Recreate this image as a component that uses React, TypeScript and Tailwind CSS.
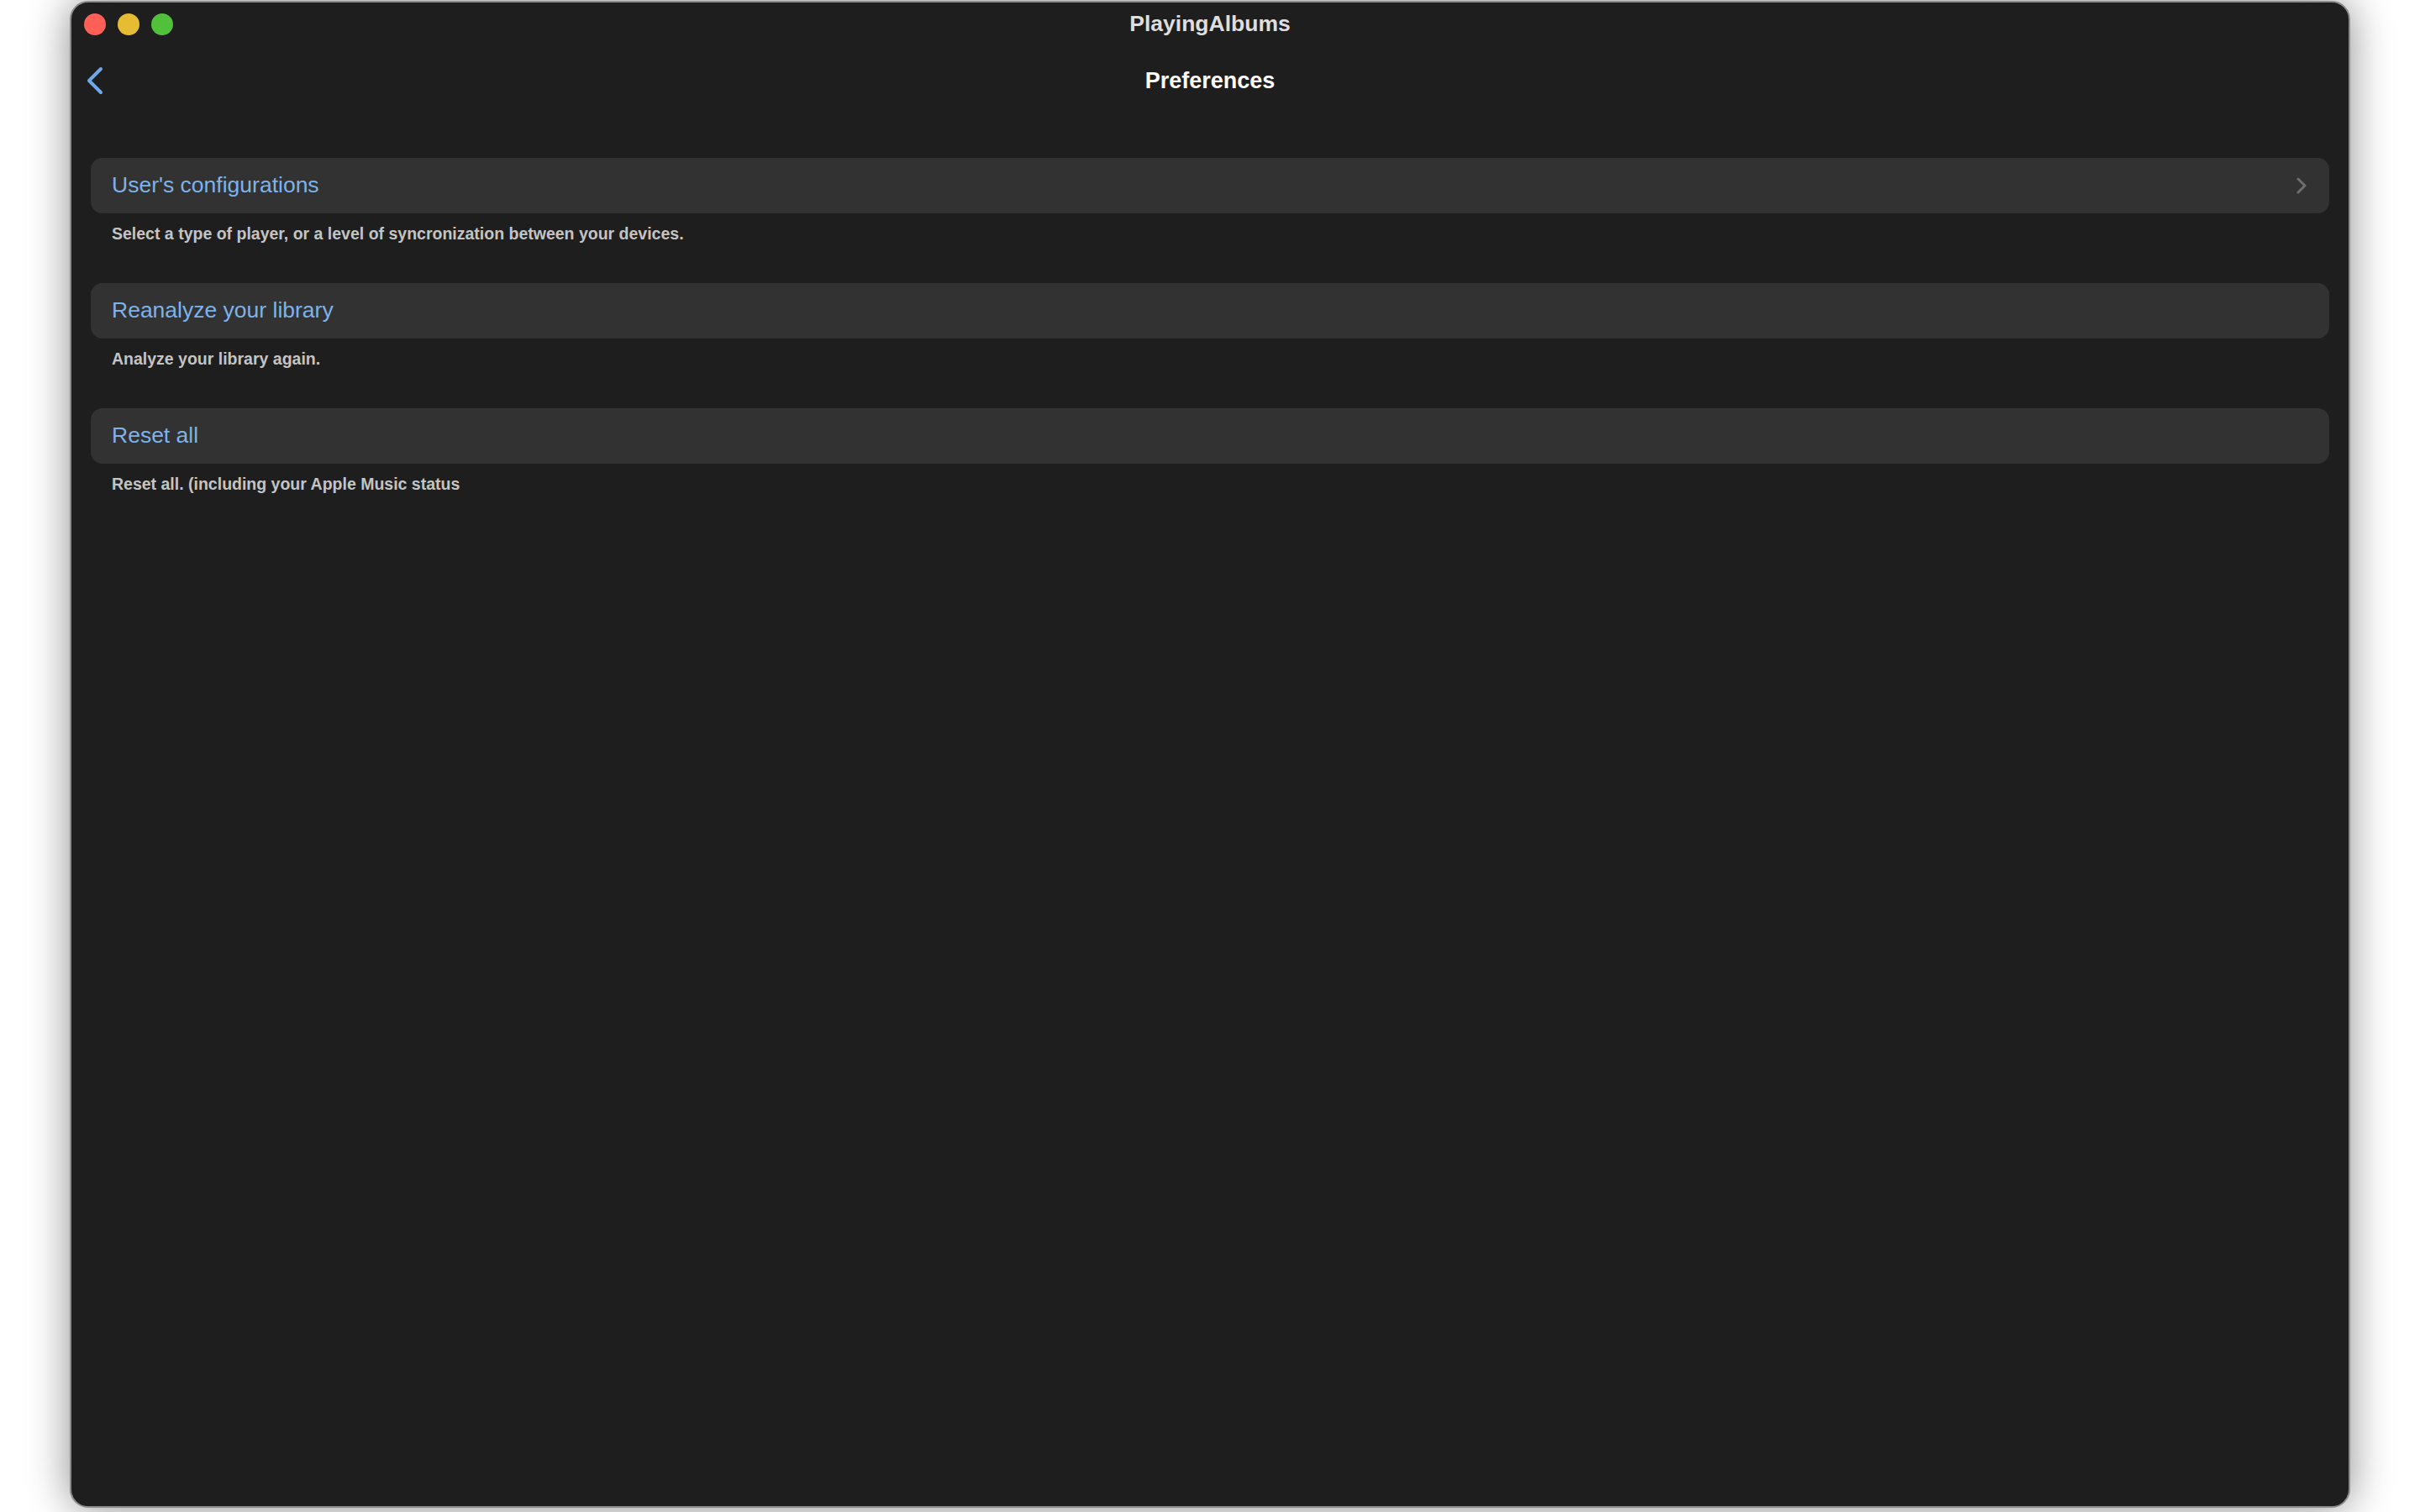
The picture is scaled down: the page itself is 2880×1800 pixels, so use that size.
import React from "react";

const sections = [
  {
    title: "User's configurations",
    sub: "Select a type of player, or a level of syncronization between your devices.",
    chevron: true,
  },
  { title: "Reanalyze your library", sub: "Analyze your library again.", chevron: false },
  { title: "Reset all", sub: "Reset all. (including your Apple Music status", chevron: false },
];

export default function App() {
  return (
    <div
      className="w-[2880px] h-[1800px] bg-white overflow-hidden pl-[83px] pt-[1px]"
      style={{ fontFamily: '"Liberation Sans", Arial, sans-serif' }}
    >
      <div className="w-[2714px] h-[1794px] rounded-[22px] border-[2px] border-[#8c8c8c] bg-[#1e1e1e] shadow-[0_0_50px_rgba(0,0,0,0.45)] flex flex-col overflow-hidden">
        {/* title bar */}
        <div className="relative h-[52px] flex items-center justify-center shrink-0">
          <div className="absolute left-[15px] top-[13px] flex gap-[14px]">
            <div className="w-[26px] h-[26px] rounded-full bg-[#fe5f57]" />
            <div className="w-[26px] h-[26px] rounded-full bg-[#e6bc33]" />
            <div className="w-[26px] h-[26px] rounded-full bg-[#51c13b]" />
          </div>
          <span className="text-[26.5px] font-bold text-[#dedede]">PlayingAlbums</span>
        </div>
        {/* nav bar */}
        <div className="relative h-[82px] flex items-center justify-center shrink-0">
          <svg
            className="absolute left-[16px] top-[24px]"
            width="24"
            height="34"
            viewBox="0 0 24 34"
            fill="none"
          >
            <path d="M19 3 L5 17 L19 31" stroke="#6fa9ec" strokeWidth="4" strokeLinecap="round" strokeLinejoin="round" />
          </svg>
          <span className="text-[27px] font-bold text-white">Preferences</span>
        </div>
        {/* content */}
        <div className="flex flex-col gap-[47px] pt-[51px] px-[23px]">
          {sections.map((s) => (
            <div key={s.title} className="flex flex-col gap-[12px]">
              <div className="h-[66px] rounded-[14px] bg-[#323232] flex items-center justify-between pl-[25px] pr-[26px]">
                <span className="text-[26.5px] text-[#7db3ea]">{s.title}</span>
                {s.chevron && (
                  <svg width="14" height="22" viewBox="0 0 14 22" fill="none">
                    <path d="M3 3 L11 11 L3 19" stroke="#6e6e6e" strokeWidth="3" strokeLinecap="round" strokeLinejoin="round" />
                  </svg>
                )}
              </div>
              <div className="pl-[25px] text-[19.5px] font-bold text-[#c4c4c4] leading-[24px]">{s.sub}</div>
            </div>
          ))}
        </div>
      </div>
    </div>
  );
}
